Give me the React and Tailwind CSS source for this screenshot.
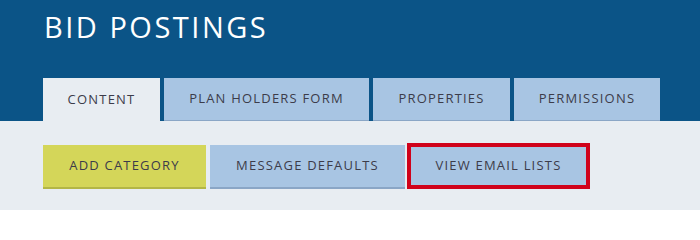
import React from "react";

const tabs = [
  { label: "CONTENT", width: "w-[117px]", active: true },
  { label: "PLAN HOLDERS FORM", width: "w-[205px]" },
  { label: "PROPERTIES", width: "w-[137px]" },
  { label: "PERMISSIONS", width: "w-[146px]" },
];

export default function App() {
  return (
    <div
      className="w-[700px] h-[210px] bg-[#e8edf2] overflow-hidden"
      style={{ fontFamily: "'Open Sans', Lato, sans-serif" }}
    >
      <div className="bg-[#0b5487] pl-[43px] pt-[8px]">
        <h1 className="text-[29px] leading-[38px] tracking-[2.5px] text-white font-normal pl-[1px]">
          BID POSTINGS
        </h1>

        <div className="flex gap-[4px] mt-[32px]">
          {tabs.map((tab) => (
            <div
              key={tab.label}
              className={
                tab.active
                  ? `${tab.width} h-[43px] bg-[#e8edf2] flex items-center justify-center text-[13px] tracking-[1.2px] text-[#3c3c4a]`
                  : `${tab.width} h-[43px] bg-[#a8c5e3] border-b border-[#8aa6c6] flex items-center justify-center text-[13px] tracking-[1.2px] text-[#3c3c4a]`
              }
            >
              {tab.label}
            </div>
          ))}
        </div>
      </div>

      <div className="flex items-end pl-[43px] pt-[22px]">
        <button className="w-[163px] h-[44px] bg-[#d4d659] border-b-2 border-[#b3b646] text-[13px] tracking-[1.2px] text-[#3c3c4a]">
          ADD CATEGORY
        </button>
        <button className="ml-[4px] w-[195px] h-[44px] bg-[#a8c5e3] border-b-2 border-[#8aa6c6] text-[13px] tracking-[1.2px] text-[#3c3c4a]">
          MESSAGE DEFAULTS
        </button>
        <button className="ml-[2px] w-[183px] h-[46px] bg-[#a8c5e3] border-4 border-[#d0021b] text-[13px] tracking-[1.2px] text-[#3c3c4a]">
          VIEW EMAIL LISTS
        </button>
      </div>
    </div>
  );
}
